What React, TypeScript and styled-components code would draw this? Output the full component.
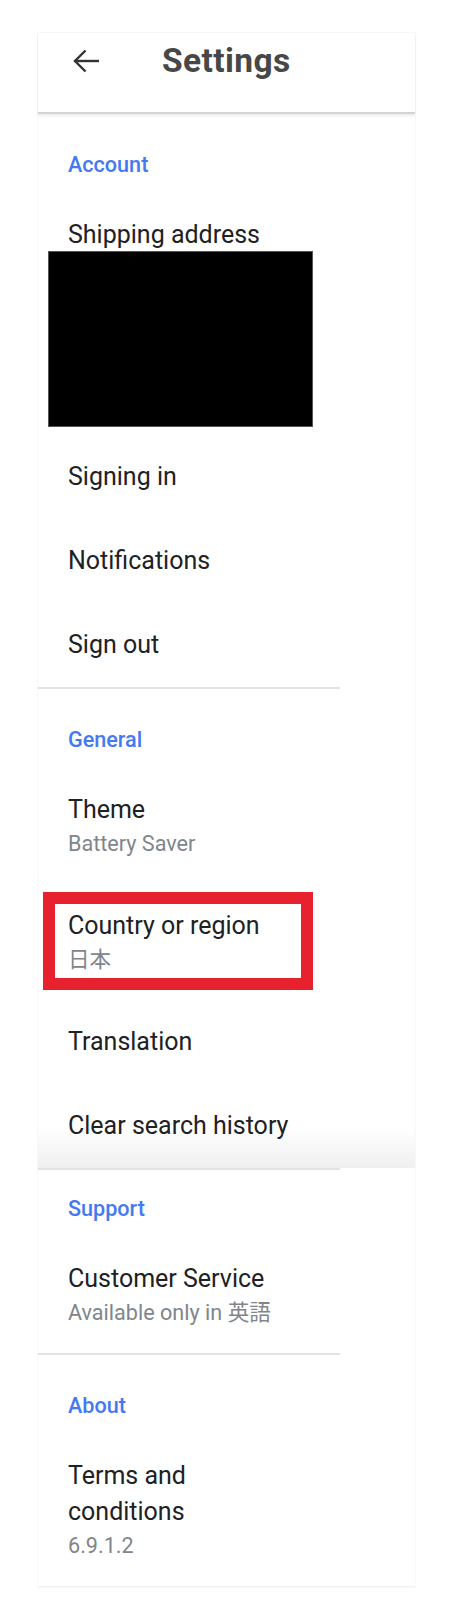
import React from "react";
import styled, { createGlobalStyle, css } from "styled-components";

const GlobalStyle = createGlobalStyle`
  html, body {
    margin: 0;
    padding: 0;
    background: #ffffff;
  }
  body {
    font-family: Roboto, "Noto Sans CJK JP", "Liberation Sans", sans-serif;
    -webkit-font-smoothing: antialiased;
  }
  * { box-sizing: border-box; }
`;

const Page = styled.div`
  padding: 33px 0 24px 38px;
`;

const Panel = styled.div`
  width: 377px;
  background: #ffffff;
  box-shadow: 0 0 0 1px #f8f8f8;
`;

const Header = styled.header`
  height: 81px;
  display: flex;
  align-items: flex-start;
  gap: 63px;
  padding: 11px 0 0 35px;
  border-bottom: 2px solid #d4d4d4;
  box-shadow: 0 2px 3px rgba(0, 0, 0, 0.08);
`;

const BackIcon = styled.svg`
  width: 26px;
  height: 26px;
  margin-top: 4px;
  flex: none;
`;

const Title = styled.h1`
  margin: 0;
  font-family: Roboto, "Liberation Sans", sans-serif;
  font-weight: 700;
  font-size: 33.5px;
  line-height: 33px;
  color: #474747;
  letter-spacing: 0.4px;
`;

const SectionTitle = styled.h2<{ $compact?: boolean }>`
  margin: 0;
  padding: ${(p) => (p.$compact ? "25px" : "37px")} 0 14px 30px;
  font-weight: 500;
  font-size: 21.6px;
  line-height: 28px;
  color: #4479f2;
`;

const Divider = styled.hr`
  margin: 0;
  border: none;
  width: 302px;
  height: 2px;
  background: #e2e2e2;
`;

const Row = styled.div<{ $shaded?: boolean; $tight?: boolean; $last?: boolean }>`
  position: relative;
  padding: 24px 0 ${(p) => (p.$tight ? "8px" : "24px")} 30px;
  ${(p) =>
    p.$shaded &&
    css`
      background: linear-gradient(to bottom, #ffffff 0, #ffffff 44px, #efefef 100%);
    `}
  ${(p) =>
    p.$last &&
    css`
      border-bottom: 1px solid #f3f3f3;
    `}
`;

const RowTitle = styled.div`
  font-weight: 400;
  font-size: 25px;
  line-height: 36px;
  color: #202124;
  max-width: 232px;
`;

const RowSub = styled.div`
  font-weight: 400;
  font-size: 21.6px;
  line-height: 32px;
  color: #80868b;
`;

const Redacted = styled.div`
  width: 265px;
  height: 176px;
  margin: -2px 0 0 -20px;
  background: #000000;
  border: 1px solid #555555;
`;

const Highlight = styled.div`
  position: absolute;
  left: 5px;
  top: 8px;
  width: 270px;
  height: 98px;
  border: 12px solid #e8212f;
  pointer-events: none;
`;

type Item = {
  title: string;
  sub?: string;
  highlight?: boolean;
  shaded?: boolean;
  redacted?: boolean;
};

type Section = {
  name: string;
  compact?: boolean;
  items: Item[];
};

const sections: Section[] = [
  {
    name: "Account",
    items: [
      { title: "Shipping address", redacted: true },
      { title: "Signing in" },
      { title: "Notifications" },
      { title: "Sign out" },
    ],
  },
  {
    name: "General",
    items: [
      { title: "Theme", sub: "Battery Saver" },
      { title: "Country or region", sub: "日本", highlight: true },
      { title: "Translation" },
      { title: "Clear search history", shaded: true },
    ],
  },
  {
    name: "Support",
    compact: true,
    items: [{ title: "Customer Service", sub: "Available only in 英語" }],
  },
  {
    name: "About",
    items: [{ title: "Terms and conditions", sub: "6.9.1.2" }],
  },
];

export default function App() {
  return (
    <>
      <GlobalStyle />
      <Page>
        <Panel>
          <Header>
            <BackIcon viewBox="0 0 26 26" fill="none" stroke="#333333" strokeWidth={2.4} strokeLinecap="square">
              <path d="M2.5 13H25" />
              <path d="M12.5 2.5L2 13l10.5 10.5" strokeLinecap="butt" />
            </BackIcon>
            <Title>Settings</Title>
          </Header>
          {sections.map((section, si) => {
            const isLast = si === sections.length - 1;
            return (
              <section key={section.name}>
                <SectionTitle $compact={section.compact}>{section.name}</SectionTitle>
                {section.items.map((item, ii) => (
                  <Row
                    key={item.title}
                    $shaded={item.shaded}
                    $tight={item.redacted}
                    $last={isLast && ii === section.items.length - 1}
                  >
                    <RowTitle>{item.title}</RowTitle>
                    {item.sub && <RowSub>{item.sub}</RowSub>}
                    {item.redacted && <Redacted />}
                    {item.highlight && <Highlight />}
                  </Row>
                ))}
                {!isLast && <Divider />}
              </section>
            );
          })}
        </Panel>
      </Page>
    </>
  );
}
